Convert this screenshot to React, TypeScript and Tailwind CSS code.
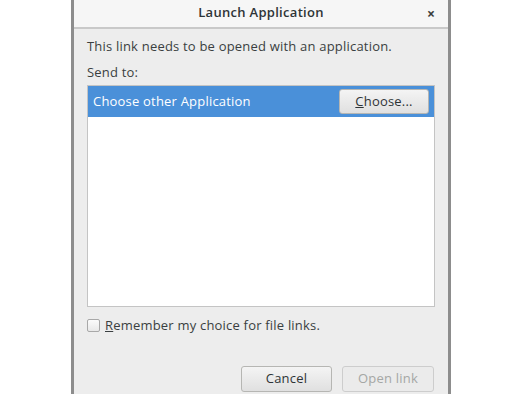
export default function App() {
  return (
    <div
      className="w-[526px] h-[394px] bg-white flex overflow-hidden"
      style={{ fontFamily: '"Open Sans", "DejaVu Sans", sans-serif' }}
    >
      <div className="ml-[71px] w-[380px] h-[394px] border-x-[3px] border-[#8d8d8d] flex flex-col bg-[#ededed]">
        {/* title bar */}
        <div className="h-[29px] shrink-0 bg-[#f6f6f6] border-b-2 border-[#c9c9c9] flex items-center relative">
          <div className="w-full text-center text-[13px] tracking-[0.3px] font-semibold text-[#2e3436] -mt-[2px]">
            Launch Application
          </div>
          <div className="absolute right-[13px] top-[3px] text-[14px] font-bold text-[#3c3c3c]">
            ×
          </div>
        </div>
        <div className="px-[13px] flex flex-col text-[13px] tracking-[0.2px] text-[#3a3f41]">
          <div className="mt-[9px] leading-[17px]">
            This link needs to be opened with an application.
          </div>
          <div className="mt-[9px] leading-[17px]">Send to:</div>
          <div className="mt-[4px] h-[222px] bg-white border border-[#c4c4c4] flex flex-col">
            <div className="h-[31px] bg-[#4a90d9] flex items-center justify-between pl-[5px] pr-[5px]">
              <span className="text-white">Choose other Application</span>
              <div className="w-[90px] h-[25px] rounded-[3px] border border-[#b6b6b3] bg-gradient-to-b from-[#f4f4f4] to-[#e0e0e0] flex items-center justify-center text-[#2e3436]">
                <span>
                  <span className="underline">C</span>hoose...
                </span>
              </div>
            </div>
          </div>
          <div className="mt-[9px] flex items-center gap-[5px]">
            <div className="w-[13px] h-[13px] rounded-[2px] border border-[#a8a8a8] bg-gradient-to-b from-[#fbfbfb] to-[#e8e8e8]" />
            <span>
              <span className="underline">R</span>emember my choice for file links.
            </span>
          </div>
          <div className="mt-[30px] flex justify-end gap-[10px] pr-[1px]">
            <div className="w-[91px] h-[26px] rounded-[3px] border border-[#b6b6b3] bg-gradient-to-b from-[#f4f4f4] to-[#e0e0e0] flex items-center justify-center text-[#2e3436]">
              Cancel
            </div>
            <div className="w-[92px] h-[26px] rounded-[3px] border border-[#cdcdcd] bg-[#ebebeb] flex items-center justify-center text-[#a5a7a5]">
              Open link
            </div>
          </div>
        </div>
      </div>
    </div>
  );
}
